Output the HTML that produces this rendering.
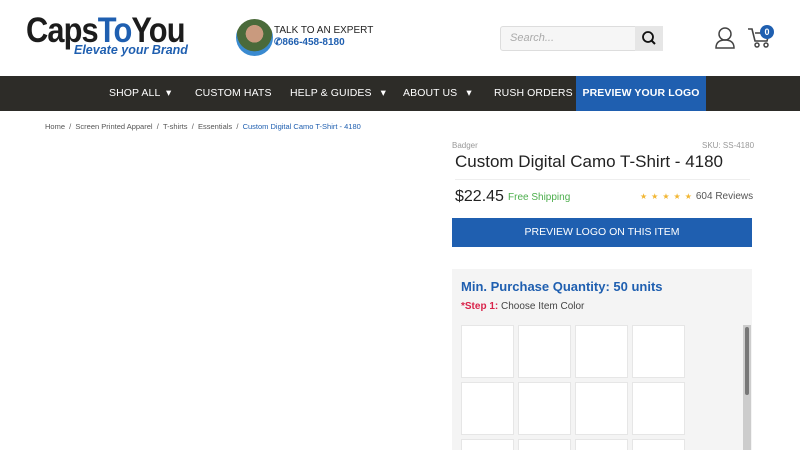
<!DOCTYPE html>
<html style="overflow:hidden;width:800px;height:450px"><head><style>
*{margin:0;padding:0;box-sizing:border-box}
body{width:800px;height:450px;overflow:hidden;background:#fff;font-family:"Liberation Sans",sans-serif;position:relative;color:#222}
.a{position:absolute}
.nav{left:0;top:76px;width:800px;height:35px;background:#2d2c28}
.nav span{position:absolute;top:0;height:35px;line-height:35px;color:#fff;font-size:10.5px;letter-spacing:.1px;white-space:nowrap}
.sw{position:absolute;width:53px;height:53px;background:#fff;border:1px solid #e6e6e6}
</style></head><body>
<div class="a" style="left:26px;top:14px;font-size:35px;font-weight:bold;letter-spacing:-1px;color:#1c1c1c;line-height:34px;transform:scaleX(.88);transform-origin:left">Caps<span style="color:#1f5fb0">To</span>You</div>
<div class="a" style="left:74px;top:43px;font-size:12.5px;font-weight:bold;font-style:italic;color:#1f5fb0;white-space:nowrap">Elevate your Brand</div>
<div class="a" style="left:236px;top:19px;width:37px;height:37px;border-radius:50%;background:radial-gradient(circle at 50% 40%,#c99a7e 0 30%,#4a6a3a 31% 60%,#3a8ad0 61%)"></div>
<div class="a" style="left:274px;top:25px;font-size:10px;color:#222">TALK TO AN EXPERT</div>
<div class="a" style="left:274px;top:37px;font-size:10px;font-weight:bold;color:#1f5fb0">&#9990;866-458-8180</div>
<div class="a" style="left:500px;top:26px;width:136px;height:25px;background:#f6f6f6;border:1px solid #ddd;border-radius:3px 0 0 3px;font-size:11px;font-style:italic;color:#aaa;line-height:23px;padding-left:9px">Search...</div>
<div class="a" style="left:635px;top:26px;width:28px;height:25px;background:#e6e6e6"></div>
<svg class="a" style="left:641px;top:30px" width="16" height="16" viewBox="0 0 16 16"><circle cx="7" cy="7" r="5" fill="none" stroke="#111" stroke-width="1.8"/><path d="M10.5 10.5L14 14" stroke="#111" stroke-width="2"/></svg>
<svg class="a" style="left:714px;top:26px" width="22" height="24" viewBox="0 0 22 24"><circle cx="11" cy="8" r="6" fill="none" stroke="#444" stroke-width="1.5"/><path d="M2 22c0-6 4-8 9-8s9 2 9 8z" fill="none" stroke="#444" stroke-width="1.5"/></svg>
<svg class="a" style="left:747px;top:27px" width="24" height="22" viewBox="0 0 24 22"><path d="M1 2h4l3 12h12l2-8H8" fill="none" stroke="#444" stroke-width="1.6"/><circle cx="10" cy="18" r="2" fill="none" stroke="#444" stroke-width="1.5"/><circle cx="19" cy="18" r="2" fill="none" stroke="#444" stroke-width="1.5"/></svg>
<div class="a" style="left:760px;top:25px;width:14px;height:14px;border-radius:50%;background:#1f5fb0;color:#fff;font-size:9px;font-weight:bold;text-align:center;line-height:14px">0</div>
<div class="a nav">
<span style="left:109px">SHOP ALL &nbsp;▾</span>
<span style="left:195px">CUSTOM HATS</span>
<span style="left:290px">HELP &amp; GUIDES &nbsp;&nbsp;▾</span>
<span style="left:403px">ABOUT US &nbsp;&nbsp;▾</span>
<span style="left:494px">RUSH ORDERS</span>
<span style="left:576px;width:130px;background:#1f5fb0;text-align:center;font-weight:bold">PREVIEW YOUR LOGO</span>
</div>
<div class="a" style="left:45px;top:122px;font-size:7.5px;color:#555;white-space:nowrap">Home &nbsp;/ &nbsp;Screen Printed Apparel &nbsp;/ &nbsp;T-shirts &nbsp;/ &nbsp;Essentials &nbsp;/ &nbsp;<span style="color:#1f5fb0">Custom Digital Camo T-Shirt - 4180</span></div>
<div class="a" style="left:452px;top:141px;font-size:8px;color:#999">Badger</div>
<div class="a" style="left:702px;top:141px;font-size:8px;color:#999">SKU: SS-4180</div>
<div class="a" style="left:455px;top:152px;font-size:17px;color:#222">Custom Digital Camo T-Shirt - 4180</div>
<div class="a" style="left:455px;top:179px;width:295px;height:1px;background:#eee"></div>
<div class="a" style="left:455px;top:188px;font-size:16px;color:#222">$22.45</div>
<div class="a" style="left:508px;top:192px;font-size:10px;color:#4cae4c">Free Shipping</div>
<div class="a" style="left:640px;top:191px;font-size:10px;color:#555;white-space:nowrap"><span style="color:#f2b632;font-size:8px;letter-spacing:4px">★★★★★</span>604 Reviews</div>
<div class="a" style="left:452px;top:218px;width:300px;height:29px;background:#1f5fb0;color:#fff;font-size:10.5px;text-align:center;line-height:29px">PREVIEW LOGO ON THIS ITEM</div>
<div class="a" style="left:452px;top:269px;width:300px;height:181px;background:#f4f4f4"></div>
<div class="a" style="left:461px;top:279px;font-size:13px;font-weight:bold;color:#1f5fb0">Min. Purchase Quantity: 50 units</div>
<div class="a" style="left:461px;top:301px;font-size:10px;color:#444"><b style="color:#d9234a">*Step 1:</b> Choose Item Color</div>
<div class="sw" style="left:461px;top:325px"></div><div class="sw" style="left:518px;top:325px"></div><div class="sw" style="left:575px;top:325px"></div><div class="sw" style="left:632px;top:325px"></div>
<div class="sw" style="left:461px;top:382px"></div><div class="sw" style="left:518px;top:382px"></div><div class="sw" style="left:575px;top:382px"></div><div class="sw" style="left:632px;top:382px"></div>
<div class="sw" style="left:461px;top:439px;height:11px;border-bottom:0"></div><div class="sw" style="left:518px;top:439px;height:11px;border-bottom:0"></div><div class="sw" style="left:575px;top:439px;height:11px;border-bottom:0"></div><div class="sw" style="left:632px;top:439px;height:11px;border-bottom:0"></div>
<div class="a" style="left:743px;top:325px;width:8px;height:125px;background:#ccc"></div>
<div class="a" style="left:745px;top:327px;width:4px;height:68px;background:#777;border-radius:2px"></div>
</body></html>
